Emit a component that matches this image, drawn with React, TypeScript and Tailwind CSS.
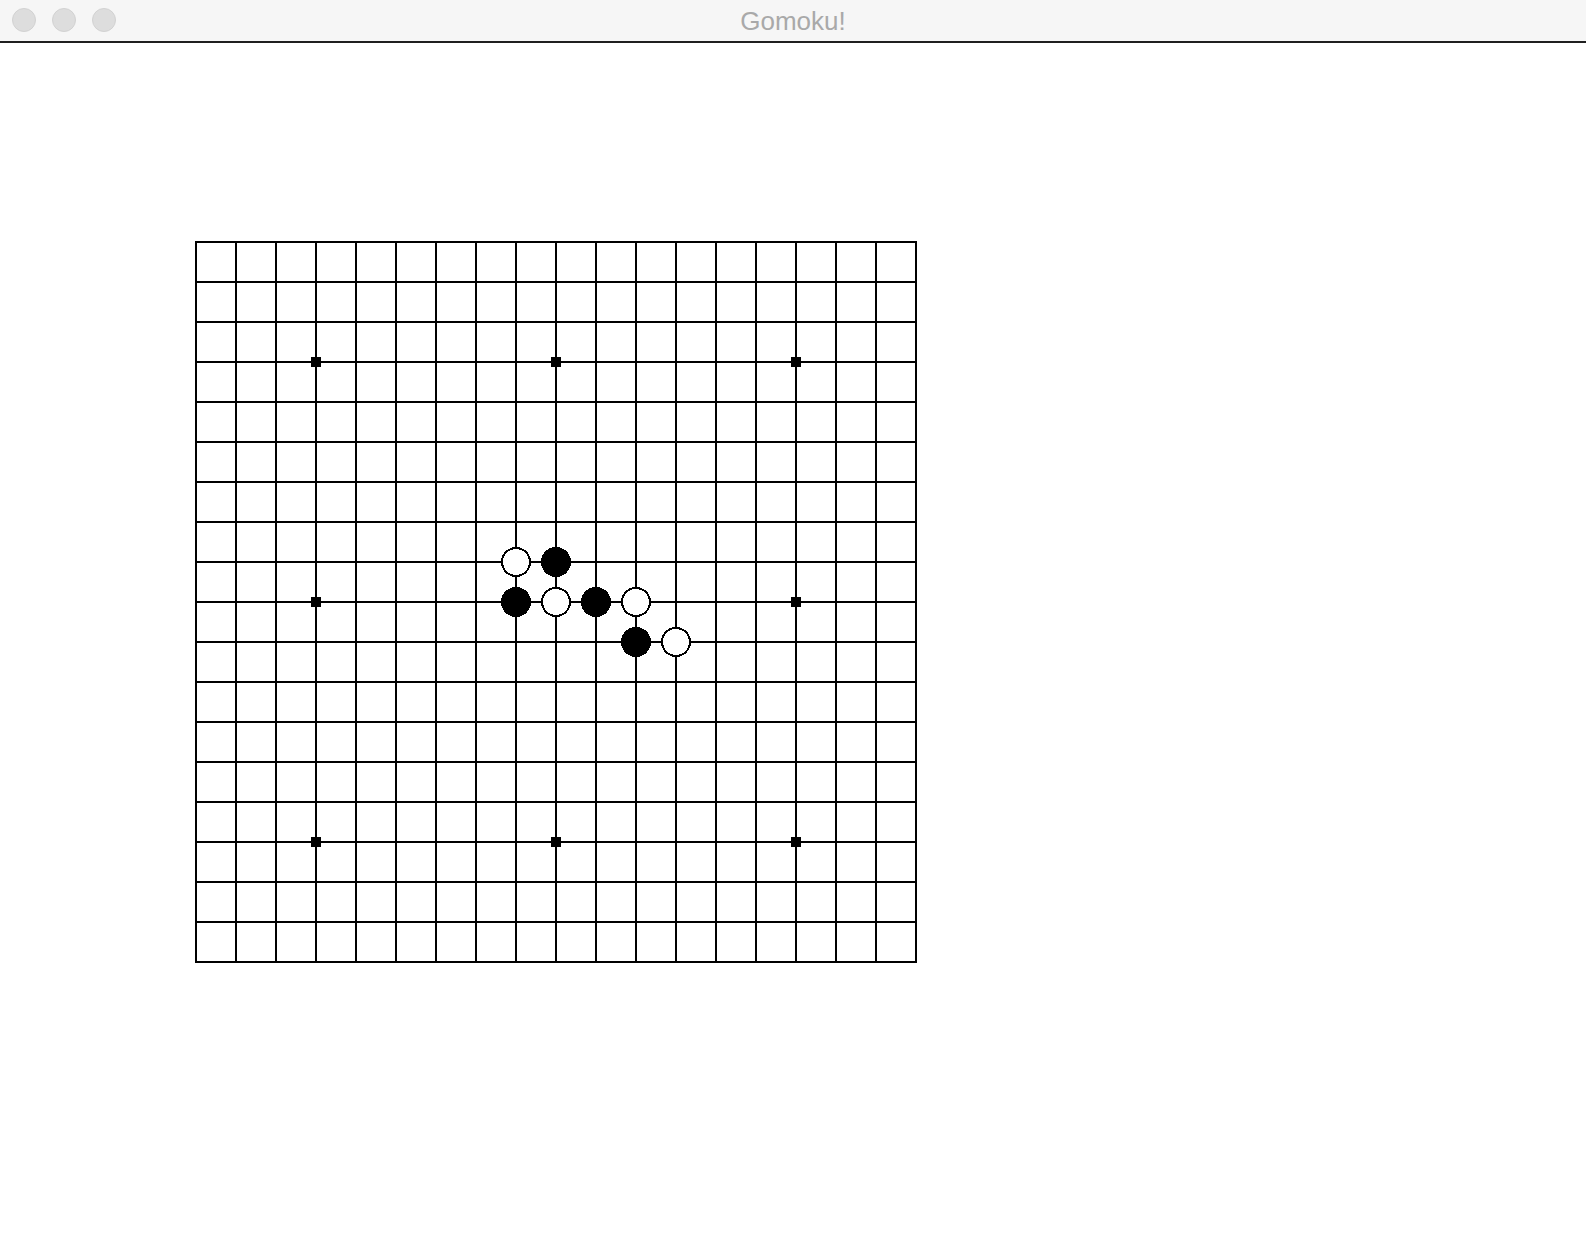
import React from "react";

const SIZE = 19;
const GAP = 40;
const BOARD = GAP * (SIZE - 1) + 2;

const stars = [3, 9, 15];

type Stone = { row: number; col: number; color: "black" | "white" };

const stones: Stone[] = [
  { row: 8, col: 8, color: "white" },
  { row: 8, col: 9, color: "black" },
  { row: 9, col: 8, color: "black" },
  { row: 9, col: 9, color: "white" },
  { row: 9, col: 10, color: "black" },
  { row: 9, col: 11, color: "white" },
  { row: 10, col: 11, color: "black" },
  { row: 10, col: 12, color: "white" },
];

function TitleBar() {
  return (
    <div className="relative flex h-[43px] items-center justify-center border-b-2 border-[#1f1f1f] bg-[#f6f6f6]">
      <div className="absolute left-[12px] top-[8px] flex gap-[16px]">
        <span className="h-[24px] w-[24px] rounded-full border border-[#d2d2d2] bg-[#dddddd]" />
        <span className="h-[24px] w-[24px] rounded-full border border-[#d2d2d2] bg-[#dddddd]" />
        <span className="h-[24px] w-[24px] rounded-full border border-[#d2d2d2] bg-[#dddddd]" />
      </div>
      <span className="text-[26px] leading-none text-[#a9a9a9] [font-family:'Liberation_Sans',Arial,sans-serif]">
        Gomoku!
      </span>
    </div>
  );
}

function Board() {
  const lines = Array.from({ length: SIZE }, (_, i) => i);
  return (
    <svg width={BOARD} height={BOARD} viewBox={`0 0 ${BOARD} ${BOARD}`} className="block">
      {lines.map((i) => (
        <rect key={`v${i}`} x={i * GAP} y={0} width={2} height={BOARD} fill="#000" shapeRendering="crispEdges" />
      ))}
      {lines.map((i) => (
        <rect key={`h${i}`} x={0} y={i * GAP} width={BOARD} height={2} fill="#000" shapeRendering="crispEdges" />
      ))}
      {stars.map((r) =>
        stars.map((c) => (
          <rect
            key={`s${r}-${c}`}
            x={c * GAP - 4}
            y={r * GAP - 4}
            width={10}
            height={10}
            fill="#000"
            shapeRendering="crispEdges"
          />
        ))
      )}
      {stones.map((s) =>
        s.color === "black" ? (
          <circle key={`${s.row}-${s.col}`} cx={s.col * GAP + 1} cy={s.row * GAP + 1} r={15} fill="#000" shapeRendering="crispEdges" />
        ) : (
          <circle
            key={`${s.row}-${s.col}`}
            cx={s.col * GAP + 1}
            cy={s.row * GAP + 1}
            r={14}
            fill="#fff"
            stroke="#000"
            strokeWidth={2}
            shapeRendering="crispEdges"
          />
        )
      )}
    </svg>
  );
}

export default function App() {
  return (
    <div className="min-h-screen bg-white">
      <TitleBar />
      <div className="pl-[195px] pt-[198px]">
        <Board />
      </div>
    </div>
  );
}
